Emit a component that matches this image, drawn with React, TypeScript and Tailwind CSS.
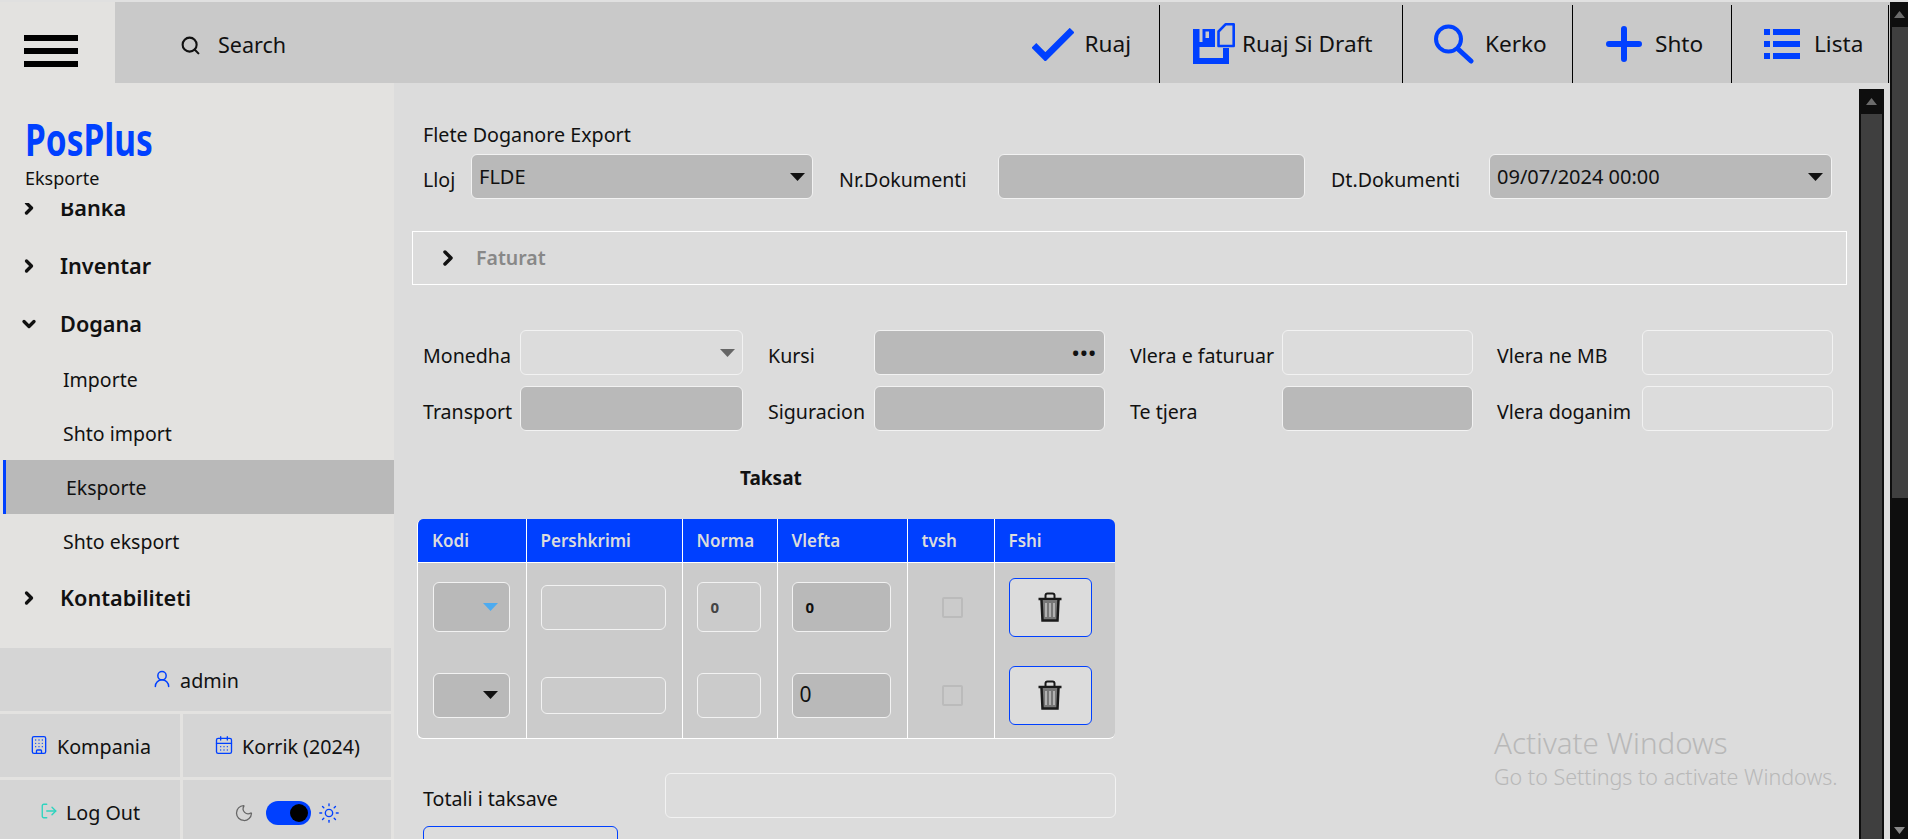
import { Building, CalendarDays, ChevronDown, ChevronRight, LogOut, Moon, Search, Sun, UserRound } from "lucide-react";
import type { ReactNode } from "react";

const inputBase = "block rounded-[6px] border border-[#f2f2f2] outline-none";
const gray = "bg-[#b9b9b9]";
const clear = "bg-transparent";

function CheckIcon() {
  return (
    <svg width="42" height="33" viewBox="0 0 44 34" fill="none" stroke="#0040ff" strokeWidth="7">
      <path d="M2 18 L14 30 L42 2" />
    </svg>
  );
}

function DraftIcon() {
  return (
    <svg width="42" height="42" viewBox="0 0 42 42" fill="#0040ff">
      <rect x="0" y="6" width="6.5" height="35" />
      <path fillRule="evenodd" d="M9.5 6 H22 V24 H0 V19 H9.5 Z M12.5 8.5 V15 H16 V8.5 Z" />
      <rect x="0" y="35" width="36" height="6" />
      <rect x="30" y="25" width="6" height="16" />
      <path d="M25.5 8.5 L32.5 1.3 H40.7 V23 H25.5 Z" fill="none" stroke="#0040ff" strokeWidth="2.6" strokeLinejoin="round" />
    </svg>
  );
}

function FindIcon() {
  return (
    <svg width="40" height="40" viewBox="0 0 40 40" fill="none" stroke="#0040ff" strokeLinecap="round">
      <circle cx="14.5" cy="15" r="12.5" strokeWidth="4" />
      <path d="M24 25 L37 37" strokeWidth="5" />
    </svg>
  );
}

function PlusIcon() {
  return (
    <svg width="36" height="36" viewBox="0 0 36 36" fill="none" stroke="#0040ff" strokeWidth="6" strokeLinecap="round">
      <path d="M3 18 H33 M18 3 V33" />
    </svg>
  );
}

function ListIcon() {
  return (
    <svg width="36" height="30" viewBox="0 0 36 30" fill="#0040ff">
      <rect x="0" y="0" width="6" height="6" />
      <rect x="9" y="0" width="27" height="6" />
      <rect x="0" y="12" width="6" height="6" />
      <rect x="9" y="12" width="27" height="6" />
      <rect x="0" y="24" width="6" height="6" />
      <rect x="9" y="24" width="27" height="6" />
    </svg>
  );
}

function TrashIcon() {
  return (
    <svg width="24" height="30" viewBox="0 0 24 30" fill="none" stroke="#1a1a1a">
      <path d="M7.5 6 V3.5 Q7.5 1.5 9.5 1.5 H14.5 Q16.5 1.5 16.5 3.5 V6" strokeWidth="2" />
      <path d="M0.5 7 H23.5" strokeWidth="2.5" />
      <path d="M3.5 8 L4.5 28.5 H19.5 L20.5 8" strokeWidth="2.5" fill="#777" />
      <path d="M8 11 V25 M12 11 V25 M16 11 V25" strokeWidth="1.5" stroke="#c4c4c4" />
    </svg>
  );
}

function Arrow({ color = "#111" }: { color?: string }) {
  return (
    <svg width="15" height="8" viewBox="0 0 15 8" style={{ fill: color }}>
      <path d="M0 0 H15 L7.5 8 Z" />
    </svg>
  );
}

function ToolButton({ icon, label, pad, gap, width, line = true }: { icon: ReactNode; label: string; pad: string; gap: string; width: string; line?: boolean }) {
  return (
    <div className={`flex h-[78px] items-center ${width} ${pad} ${gap} ${line ? "border-l border-black" : ""}`}>
      {icon}
      <span className="text-[22.6px] whitespace-nowrap text-[#111]">{label}</span>
    </div>
  );
}

function NavGroup({ label, open = false }: { label: string; open?: boolean }) {
  return (
    <div className="flex h-[58px] items-center">
      <div className="flex w-[60px] justify-start pl-[19px]">
        {open ? <ChevronDown size={20} strokeWidth={4} color="#111" /> : <ChevronRight size={20} strokeWidth={4} color="#111" />}
      </div>
      <span className="text-[21.7px] font-semibold text-[#111]">{label}</span>
    </div>
  );
}

function NavItem({ label, active = false }: { label: string; active?: boolean }) {
  return (
    <div className={`flex h-[54px] items-center text-[19.5px] text-[#111] ${active ? "ml-[3px] border-l-[3px] border-[#0040ff] bg-[#b9b9b9] pl-[60px]" : "pl-[63px]"}`}>
      <span className="pt-[2px]">{label}</span>
    </div>
  );
}

function Label({ text, width }: { text: string; width: string }) {
  return <label className={`${width} shrink-0 pt-[7px] text-[19.6px] whitespace-nowrap text-[#111]`}>{text}</label>;
}

function Sidebar() {
  return (
    <aside className="flex h-[756px] w-[394px] shrink-0 flex-col overflow-hidden bg-[#e3e2e0]">
      <div className="h-[120px] shrink-0 pt-[28px] pl-[25px]">
        <div className="h-[55px] origin-left scale-x-[0.76] text-[44px] leading-[56px] font-bold whitespace-nowrap text-[#0040ff]">PosPlus</div>
        <div className="text-[18px] leading-[24px] text-[#111]">Eksporte</div>
      </div>
      <nav className="h-[445px] shrink-0 overflow-hidden">
        <div className="-mt-[24px]">
          <NavGroup label="Banka" />
          <NavGroup label="Inventar" />
          <div className="-mb-[1px]"><NavGroup label="Dogana" open /></div>
          <NavItem label="Importe" />
          <NavItem label="Shto import" />
          <NavItem label="Eksporte" active />
          <NavItem label="Shto eksport" />
          <div className="pt-[1px]"><NavGroup label="Kontabiliteti" /></div>
        </div>
      </nav>
      <div className="grid w-[391px] grid-cols-[180px_208px] gap-[3px] text-[19.7px] text-[#111]">
        <div className="col-span-2 flex h-[63px] items-center justify-center gap-2 bg-[#d5d5d5]">
          <UserRound size={20} color="#0040ff" strokeWidth={1.8} className="-mt-[2px]" />
          <span className="pt-[3px]">admin</span>
        </div>
        <div className="flex h-[63px] items-center justify-center gap-2 bg-[#d5d5d5]">
          <Building size={20} color="#0040ff" strokeWidth={1.6} className="-mt-[2px]" />
          <span className="pt-[3px]">Kompania</span>
        </div>
        <div className="flex h-[63px] items-center justify-center gap-2 bg-[#d5d5d5]">
          <CalendarDays size={20} color="#0040ff" strokeWidth={1.6} className="-mt-[2px]" />
          <span className="pt-[3px]">Korrik (2024)</span>
        </div>
        <div className="flex h-[63px] items-center justify-center gap-2 bg-[#d5d5d5]">
          <LogOut size={18} color="#2dd4bf" strokeWidth={1.8} className="-mt-[2px]" />
          <span className="pt-[3px]">Log Out</span>
        </div>
        <div className="flex h-[63px] items-center justify-center gap-3 bg-[#d5d5d5] pt-[3px]">
          <Moon size={20} color="#666" strokeWidth={1.5} />
          <div className="flex h-[24px] w-[45px] items-center justify-end rounded-full bg-[#0040ff] pr-[3px]">
            <div className="size-[18px] rounded-full bg-black" />
          </div>
          <Sun size={22} color="#0040ff" strokeWidth={1.5} className="-ml-[5px]" />
        </div>
      </div>
    </aside>
  );
}

function TaxRow({ height, code, descH, norma, value, valueClass, arrow }: { height: string; code: string; descH: string; norma?: string; value: string; valueClass: string; arrow: ReactNode }) {
  return (
    <tr className={height}>
      <td className="border-r border-white px-[15px] align-middle">
        <div className={`${inputBase} ${gray} ${code} flex h-[50px] w-[77px] items-center justify-end pr-[11px]`}>{arrow}</div>
      </td>
      <td className="border-r border-white px-[14px] align-middle">
        <input readOnly className={`${inputBase} ${clear} ${descH} w-[125px]`} />
      </td>
      <td className="border-r border-white px-[14px] align-middle">
        <div className={`${inputBase} ${code} flex h-[50px] w-[64px] items-center pl-[13px] text-[15px] font-bold text-[#444]`}>{norma}</div>
      </td>
      <td className="border-r border-white px-[14px] align-middle">
        <div className={`${inputBase} ${gray} ${code} flex h-[50px] w-[99px] items-center text-[#111] ${valueClass}`}>{value}</div>
      </td>
      <td className="border-r border-white align-middle">
        <div className="ml-[34px] size-[21px] rounded-[2px] border-2 border-[#bbbbbb]" />
      </td>
      <td className="px-[14px] align-middle">
        <button className="flex h-[59px] w-[83px] items-center justify-center rounded-[6px] border border-[#0040ff] bg-[#dcdcdc]">
          <TrashIcon />
        </button>
      </td>
    </tr>
  );
}

function TaxTable() {
  const headers = ["Kodi", "Pershkrimi", "Norma", "Vlefta", "tvsh", "Fshi"];
  return (
    <div className="-ml-[6px] w-[698px] overflow-hidden rounded-[6px] border-b border-l border-white bg-[#cbcbcb]">
      <table className="w-full table-fixed border-collapse">
        <colgroup>
          <col className="w-[108px]" />
          <col className="w-[156px]" />
          <col className="w-[95px]" />
          <col className="w-[130px]" />
          <col className="w-[87px]" />
          <col className="w-[122px]" />
        </colgroup>
        <thead>
          <tr className="h-[43px] bg-[#0040ff]">
            {headers.map((h, i) => (
              <th key={h} className={`border-b border-white pl-[14px] text-left text-[17px] font-semibold text-[#dcdcdc] ${i < 5 ? "border-r" : ""}`}>
                {h}
              </th>
            ))}
          </tr>
        </thead>
        <tbody>
          <TaxRow height="h-[90px]" code="" descH="h-[45px]" norma="0" value="0" valueClass="pl-[13px] text-[15px] font-bold" arrow={<Arrow color="#4dabf0" />} />
          <TaxRow height="h-[86px]" code="!h-[45px]" descH="h-[37px]" value="0" valueClass="pl-[7px] text-[21px]" arrow={<Arrow />} />
        </tbody>
      </table>
    </div>
  );
}

function Form() {
  return (
    <div className="h-[756px] flex-1 overflow-hidden pt-[38px] pl-[29px]">
      <div className="h-[33px] text-[19.7px] leading-[28px] text-[#111]">Flete Doganore Export</div>

      <div className="flex h-[45px] items-center">
        <Label text="Lloj" width="w-[48px]" />
        <div className={`${inputBase} ${gray} flex h-[45px] w-[342px] items-center justify-between pr-[7px] pl-[7px] text-[20px] text-[#111]`}>
          FLDE
          <Arrow />
        </div>
        <Label text="Nr.Dokumenti" width="ml-[26px] w-[159px]" />
        <input readOnly className={`${inputBase} ${gray} h-[45px] w-[307px]`} />
        <Label text="Dt.Dokumenti" width="ml-[26px] w-[158px]" />
        <div className={`${inputBase} ${gray} flex h-[45px] w-[343px] items-center justify-between pr-[8px] pl-[7px] text-[20px] text-[#111]`}>
          09/07/2024 00:00
          <Arrow />
        </div>
      </div>

      <div className="mt-[32px] -ml-[11px] flex h-[54px] w-[1435px] items-center gap-[16px] border border-white pl-[23px]">
        <ChevronRight size={24} strokeWidth={3.5} color="#111" />
        <span className="text-[19.5px] font-semibold text-[#888]">Faturat</span>
      </div>

      <div className="mt-[45px] flex h-[45px] items-center">
        <Label text="Monedha" width="w-[97px]" />
        <div className={`${inputBase} ${clear} flex h-[45px] w-[223px] items-center justify-end pr-[7px]`}>
          <Arrow color="#666" />
        </div>
        <Label text="Kursi" width="ml-[25px] w-[106px]" />
        <div className={`${inputBase} ${gray} flex h-[45px] w-[231px] items-center justify-end pr-[7px] text-[18px] leading-[16px] font-bold tracking-[1.5px] text-[#111]`}>
          •••
        </div>
        <Label text="Vlera e faturuar" width="ml-[25px] w-[152px]" />
        <input readOnly className={`${inputBase} ${clear} h-[45px] w-[191px]`} />
        <Label text="Vlera ne MB" width="ml-[24px] w-[145px]" />
        <input readOnly className={`${inputBase} ${clear} h-[45px] w-[191px]`} />
      </div>

      <div className="mt-[11px] flex h-[45px] items-center">
        <Label text="Transport" width="w-[97px]" />
        <input readOnly className={`${inputBase} ${gray} h-[45px] w-[223px]`} />
        <Label text="Siguracion" width="ml-[25px] w-[106px]" />
        <input readOnly className={`${inputBase} ${gray} h-[45px] w-[231px]`} />
        <Label text="Te tjera" width="ml-[25px] w-[152px]" />
        <input readOnly className={`${inputBase} ${gray} h-[45px] w-[191px]`} />
        <Label text="Vlera doganim" width="ml-[24px] w-[145px]" />
        <input readOnly className={`${inputBase} ${clear} h-[45px] w-[191px]`} />
      </div>

      <div className="mt-[33px] ml-[317px] h-[28px] text-[19px] leading-[28px] font-bold text-[#111]">Taksat</div>

      <div className="mt-[27px]">
        <TaxTable />
      </div>

      <div className="mt-[34px] flex h-[45px] items-center">
        <Label text="Totali i taksave" width="w-[242px]" />
        <input readOnly className={`${inputBase} ${clear} h-[45px] w-[451px]`} />
      </div>
      <button className="mt-[8px] block h-[45px] w-[195px] rounded-[6px] border border-[#0040ff]" />
    </div>
  );
}

function ScrollBar({ thumb, className }: { thumb: string; className: string }) {
  return (
    <div className={`flex flex-col bg-[#0e0e0e] ${className}`}>
      <div className="flex h-[25px] shrink-0 items-center justify-center">
        <svg width="11" height="7" viewBox="0 0 11 7" fill="#6b6b6b">
          <path d="M0 7 L5.5 0 L11 7 Z" />
        </svg>
      </div>
      <div className={`bg-[#3f3f3f] ${thumb}`} />
    </div>
  );
}

export default function App() {
  return (
    <div className="relative flex h-[839px] w-[1908px] overflow-hidden bg-[#e0e0e0] font-['Noto_Sans',sans-serif]">
      <div className="flex w-[1890px] flex-col pt-[2px]">
        <header className="flex h-[81px] shrink-0">
          <div className="flex w-[115px] shrink-0 flex-col justify-center gap-[7px] bg-[#e3e2e0] pt-[16px] pl-[24px]">
            <div className="h-[6px] w-[54px] bg-black" />
            <div className="h-[6px] w-[54px] bg-black" />
            <div className="h-[6px] w-[54px] bg-black" />
          </div>
          <div className="flex flex-1 items-end justify-between bg-[#c9c9c9] pr-[1px]">
            <div className="flex h-[81px] items-center pt-[5px] pl-[65px]">
              <Search size={21} color="#111" strokeWidth={2.4} />
              <span className="ml-[17px] text-[21.5px] text-[#111]">Search</span>
            </div>
            <div className="flex items-end border-r border-black">
              <ToolButton icon={<CheckIcon />} label="Ruaj" pad="" gap="gap-[10px]" width="" line={false} />
              <div className="w-[28px]" />
              <ToolButton icon={<DraftIcon />} label="Ruaj Si Draft" pad="pl-[33px]" gap="gap-[7px]" width="w-[243px]" />
              <ToolButton icon={<FindIcon />} label="Kerko" pad="pl-[31px]" gap="gap-[11px]" width="w-[170px]" />
              <ToolButton icon={<PlusIcon />} label="Shto" pad="pl-[33px]" gap="gap-[13px]" width="w-[159px]" />
              <ToolButton icon={<ListIcon />} label="Lista" pad="pl-[32px]" gap="gap-[14px]" width="w-[157px]" />
            </div>
          </div>
        </header>
        <div className="flex flex-1 bg-[#dcdcdc]">
          <Sidebar />
          <Form />
          <ScrollBar className="mt-[6px] mr-[6px] h-[750px] w-[25px] shrink-0" thumb="mx-[2px] flex-1" />
        </div>
      </div>
      <ScrollBar className="mt-[2px] h-[837px] w-[18px]" thumb="ml-[2px] h-[471px]" />
      <div className="pointer-events-none absolute top-[725px] left-[1494px] text-[#b8b8b8]">
        <div className="text-[29.5px] leading-[36px] font-light whitespace-nowrap">Activate Windows</div>
        <div className="mt-[4px] text-[21.5px] leading-[24px] font-light whitespace-nowrap">Go to Settings to activate Windows.</div>
      </div>
      <svg className="absolute right-[3px] bottom-[5px]" width="11" height="7" viewBox="0 0 11 7" fill="#8a8a8a">
        <path d="M0 0 L5.5 7 L11 0 Z" />
      </svg>
    </div>
  );
}
